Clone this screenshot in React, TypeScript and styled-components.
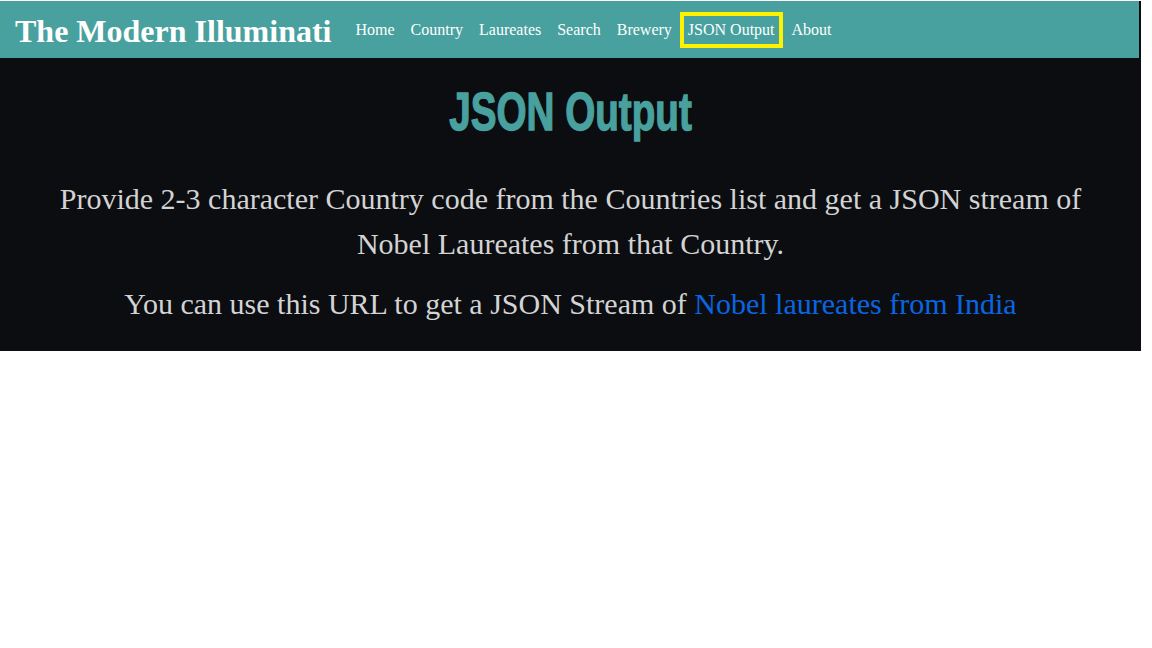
import React from "react";
import styled, { createGlobalStyle } from "styled-components";

const Global = createGlobalStyle`
  html, body { margin: 0; padding: 0; background: #ffffff; }
  body { font-family: "Liberation Serif", "Times New Roman", serif; }
`;

const Page = styled.div`
  width: 1141px;
  background: #0b0d11;
  padding-bottom: 25px;
`;

const NavBar = styled.nav`
  display: flex;
  align-items: center;
  height: 57px;
  margin: 1px 2px 0 0;
  background: #48a19e;
  padding: 0 0 0 15px;
`;

const Brand = styled.a`
  font-family: "Liberation Serif", serif;
  font-weight: 700;
  font-size: 32px;
  color: #ffffff;
  text-decoration: none;
  margin-right: 16px;
  padding-top: 3px;
`;

const NavList = styled.ul`
  display: flex;
  align-items: center;
  list-style: none;
  margin: 0;
  padding: 1px 0 0 0;
`;

const NavItem = styled.li<{ $active?: boolean }>`
  font-size: 16px;
  color: #ffffff;
  padding: ${(p) => (p.$active ? "5px 4px" : "9px 8px")};
  border: ${(p) => (p.$active ? "4px solid #fff200" : "none")};
  margin: ${(p) => (p.$active ? "0 1px 0 0" : "0")};
  line-height: 18px;
  cursor: pointer;
`;

const Main = styled.main`
  text-align: center;
  color: #d3d3d3;
  padding: 0 30px;
`;

const Title = styled.h1`
  font-family: "Liberation Sans Narrow", "Liberation Sans", sans-serif;
  font-weight: 700;
  font-size: 46px;
  color: #48a19e;
  -webkit-text-stroke: 1.2px #48a19e;
  margin: 0;
  padding-top: 24px;
  height: 94px;
  line-height: 60px;
  transform: scale(0.84, 1.15);
`;

const Para = styled.p`
  font-size: 30px;
  line-height: 45px;
  margin: 0;
`;

const ParaSpaced = styled(Para)`
  margin-top: 15px;
`;

const Link = styled.a`
  color: #0a66e0;
  text-decoration: none;
`;

export default function App() {
  const items = ["Home", "Country", "Laureates", "Search", "Brewery", "JSON Output", "About"];
  return (
    <>
      <Global />
      <Page>
        <NavBar>
          <Brand href="#">The Modern Illuminati</Brand>
          <NavList>
            {items.map((i) => (
              <NavItem key={i} $active={i === "JSON Output"}>
                {i}
              </NavItem>
            ))}
          </NavList>
        </NavBar>
        <Main>
          <Title>JSON Output</Title>
          <Para>
            Provide 2-3 character Country code from the Countries list and get a JSON stream of
            <br />
            Nobel Laureates from that Country.
          </Para>
          <ParaSpaced>
            You can use this URL to get a JSON Stream of <Link href="#">Nobel laureates from India</Link>
          </ParaSpaced>
        </Main>
      </Page>
    </>
  );
}
